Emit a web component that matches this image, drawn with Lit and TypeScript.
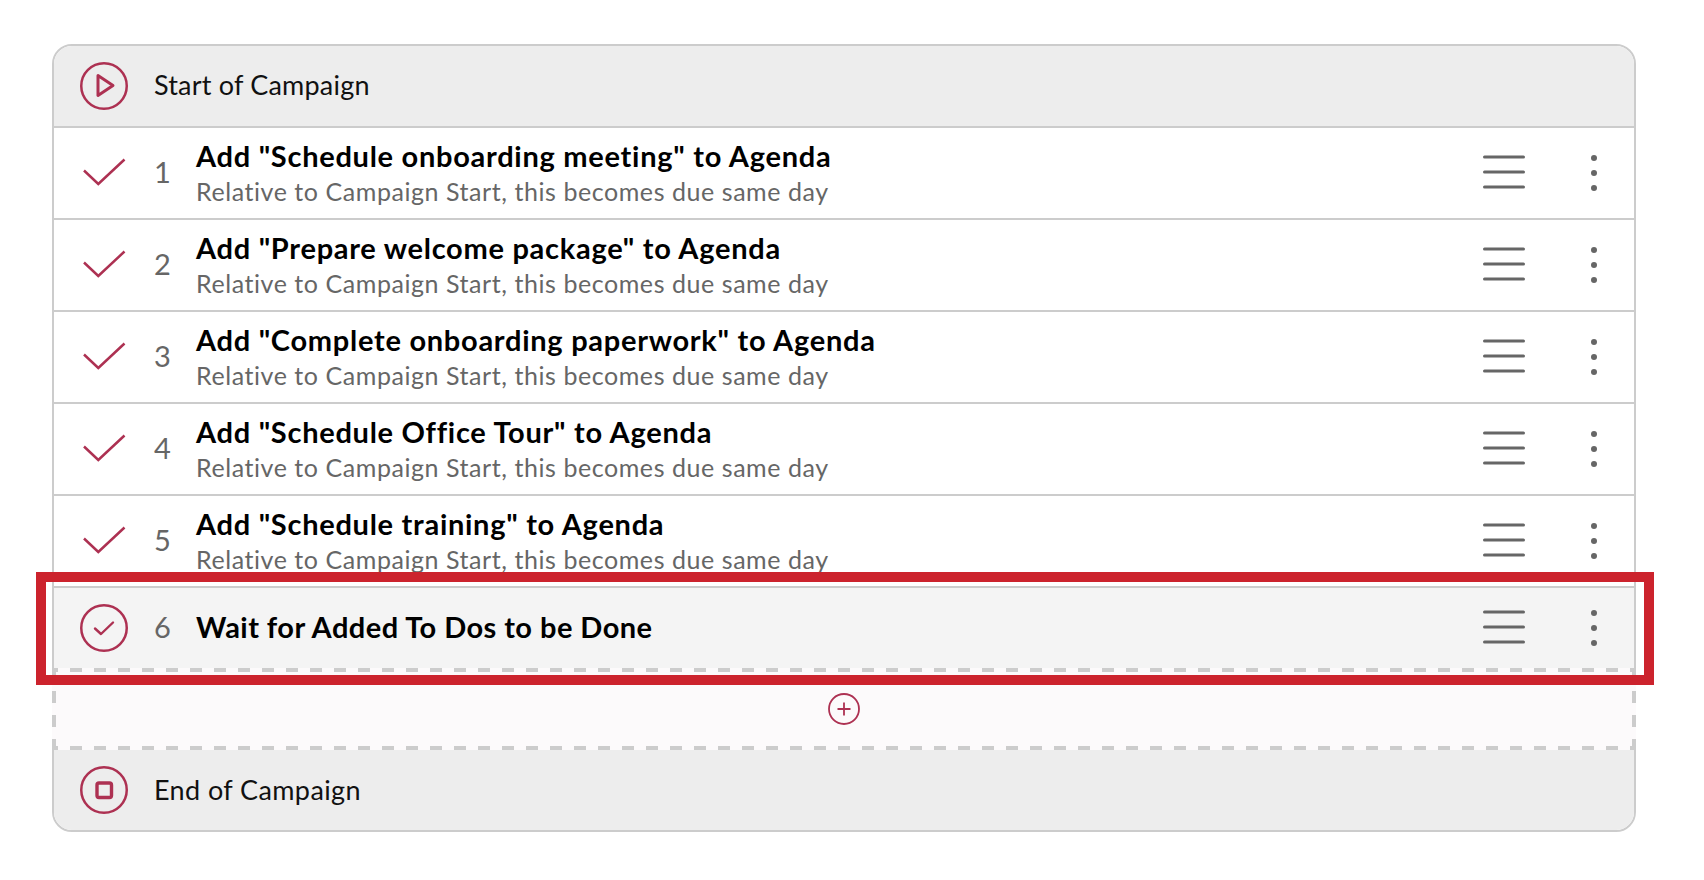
import { LitElement, html, css, svg } from 'lit';
import { customElement } from 'lit/decorators.js';

const SUBTITLE = 'Relative to Campaign Start, this becomes due same day';

const STEPS = [
  'Add "Schedule onboarding meeting" to Agenda',
  'Add "Prepare welcome package" to Agenda',
  'Add "Complete onboarding paperwork" to Agenda',
  'Add "Schedule Office Tour" to Agenda',
  'Add "Schedule training" to Agenda',
];

const circleIcon = (inner: unknown) => html`
  <svg class="icon" width="48" height="48" viewBox="0 0 48 48" fill="none" stroke="#ad3152">
    <circle cx="24" cy="24" r="22.75" stroke-width="2.5"></circle>
    ${inner}
  </svg>
`;

const playIcon = svg`<path d="M18 13.5 L33 23.5 L18 33.5 Z" stroke-width="3" stroke-linejoin="round"></path>`;
const stopIcon = svg`<rect x="17" y="17" width="14.5" height="14.5" rx="2" stroke-width="3.4"></rect>`;
const waitIcon = svg`<path d="M15 24.5 L21 30 L33 18.5" stroke-width="2.4" stroke-linecap="round" stroke-linejoin="round"></path>`;

const checkIcon = html`
  <svg class="icon" width="48" height="48" viewBox="0 0 48 48" fill="none" stroke="#ad3152">
    <path d="M4 21.5 L18.3 35 L44.5 10.5" stroke-width="2.5"></path>
  </svg>
`;

const dragIcon = html`
  <svg class="drag" width="42" height="36" viewBox="0 0 42 36" stroke="#666" stroke-width="3" stroke-linecap="round">
    <path d="M1.5 3H40.5M1.5 18H40.5M1.5 33H40.5"></path>
  </svg>
`;

const moreIcon = html`
  <svg class="more" width="6" height="36" viewBox="0 0 6 36" fill="#666">
    <circle cx="3" cy="3" r="3"></circle>
    <circle cx="3" cy="18" r="3"></circle>
    <circle cx="3" cy="33" r="3"></circle>
  </svg>
`;

@customElement('app-root')
export class AppRoot extends LitElement {
  static styles = css`
    :host {
      display: block;
      position: relative;
      height: 880px;
      padding: 44px 68px 0 52px;
      box-sizing: border-box;
      background: #fff;
      font-family: 'Lato', 'Liberation Sans', sans-serif;
    }
    .campaign {
      border: 2px solid #ccc;
      border-radius: 20px;
    }
    .cap {
      display: flex;
      align-items: center;
      height: 80px;
      padding-left: 26px;
      background: #ededed;
      color: #111;
      font-size: 27px;
      letter-spacing: 0.2px;
    }
    .cap span {
      margin-top: -4px;
    }
    .cap.start {
      border-bottom: 2px solid #ccc;
      border-radius: 18px 18px 0 0;
    }
    .cap.end {
      border-radius: 0 0 18px 18px;
      letter-spacing: 0.4px;
    }
    .cap.end span {
      margin-top: -2px;
    }
    .cap .icon {
      margin-right: 26px;
    }
    .step {
      display: flex;
      align-items: center;
      height: 90px;
      padding-left: 26px;
      border-bottom: 2px solid #ccc;
    }
    .step.wait {
      height: 80px;
      border-bottom: 0;
      background: #f4f4f4;
    }
    .step .icon {
      flex: none;
    }
    .number {
      width: 42px;
      margin-left: 26px;
      margin-top: -3px;
      color: #666;
      font-size: 29px;
    }
    .copy {
      flex: 1;
      min-width: 0;
    }
    .title {
      margin-top: 1px;
      color: #000;
      font-size: 29px;
      font-weight: 700;
      line-height: 34px;
      letter-spacing: 0.72px;
    }
    .wait .title {
      margin-top: -2px;
      letter-spacing: 0.45px;
    }
    .subtitle {
      margin-top: 1px;
      color: #666;
      font-size: 25px;
      line-height: 34px;
      letter-spacing: 0.56px;
    }
    .drag {
      margin-top: -2px;
      margin-right: 66px;
    }
    .more {
      margin-right: 37px;
    }
    .drop {
      display: flex;
      align-items: center;
      justify-content: center;
      height: 82px;
      margin: 0 -2px;
      background:
        repeating-linear-gradient(90deg, #ccc 0 6px, transparent 6px 18px, #ccc 18px 24px) top / 100% 4px no-repeat,
        repeating-linear-gradient(90deg, #ccc 0 6px, transparent 6px 18px, #ccc 18px 24px) bottom / 100% 4px no-repeat,
        repeating-linear-gradient(180deg, #ccc 0 11px, transparent 11px 23px, #ccc 23px 24px) left / 4px 100% no-repeat,
        repeating-linear-gradient(180deg, #ccc 0 11px, transparent 11px 23px, #ccc 23px 24px) right / 4px 100% no-repeat,
        #fcfafb;
    }
    .highlight {
      position: absolute;
      left: 36px;
      top: 572px;
      width: 1618px;
      height: 113px;
      box-sizing: border-box;
      border: 10px solid #cc232d;
    }
  `;

  render() {
    return html`
      <div class="campaign">
        <div class="cap start">${circleIcon(playIcon)}<span>Start of Campaign</span></div>
        ${STEPS.map(
          (title, i) => html`
            <div class="step">
              ${checkIcon}
              <div class="number">${i + 1}</div>
              <div class="copy">
                <div class="title">${title}</div>
                <div class="subtitle">${SUBTITLE}</div>
              </div>
              ${dragIcon} ${moreIcon}
            </div>
          `
        )}
        <div class="step wait">
          ${circleIcon(waitIcon)}
          <div class="number">6</div>
          <div class="copy"><div class="title">Wait for Added To Dos to be Done</div></div>
          ${dragIcon} ${moreIcon}
        </div>
        <div class="drop">
          <svg width="32" height="32" viewBox="0 0 32 32" fill="none" stroke="#ad3152">
            <circle cx="16" cy="16" r="15" stroke-width="1.8"></circle>
            <path d="M9.5 16H22.5M16 9.5V22.5" stroke-width="1.8"></path>
          </svg>
        </div>
        <div class="cap end">${circleIcon(stopIcon)}<span>End of Campaign</span></div>
      </div>
      <div class="highlight"></div>
    `;
  }
}
